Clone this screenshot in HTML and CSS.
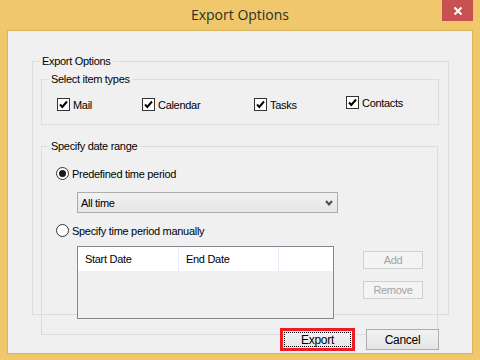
FILE: index.html
```html
<!DOCTYPE html>
<html lang="en">
<head>
    <meta charset="UTF-8">
    <title>Export Options</title>
    <link rel="stylesheet" href="styles.css">
</head>
<body>
    <div class="window">
        <div class="titlebar">
            <span class="title">Export Options</span>
            <div class="close">
                <svg width="10" height="10" viewBox="0 0 10 10"><path d="M1.5 1.5 L8.5 8.5 M8.5 1.5 L1.5 8.5" stroke="#fff" stroke-width="2"/></svg>
            </div>
        </div>

        <div class="client">
            <div class="group group-outer">
                <span class="legend">Export Options</span>

                <div class="group group-types">
                    <span class="legend">Select item types</span>
                    <div class="types">
                        <label class="check check-mail"><span class="box"><svg width="11" height="11" viewBox="0 0 11 11"><polyline points="2,5.5 4.3,8 9,2.5" fill="none" stroke="#000" stroke-width="2"/></svg></span>Mail</label>
                        <label class="check check-calendar"><span class="box"><svg width="11" height="11" viewBox="0 0 11 11"><polyline points="2,5.5 4.3,8 9,2.5" fill="none" stroke="#000" stroke-width="2"/></svg></span>Calendar</label>
                        <label class="check check-tasks"><span class="box"><svg width="11" height="11" viewBox="0 0 11 11"><polyline points="2,5.5 4.3,8 9,2.5" fill="none" stroke="#000" stroke-width="2"/></svg></span>Tasks</label>
                        <label class="check check-contacts"><span class="box"><svg width="11" height="11" viewBox="0 0 11 11"><polyline points="2,5.5 4.3,8 9,2.5" fill="none" stroke="#000" stroke-width="2"/></svg></span>Contacts</label>
                    </div>
                </div>

                <div class="group group-range">
                    <span class="legend">Specify date range</span>
                    <label class="radio radio-first"><span class="circle on"></span>Predefined time period</label>
                    <div class="select">
                        <span>All time</span>
                        <svg width="8" height="6" viewBox="0 0 8 6"><polyline points="1,1 4,4.5 7,1" fill="none" stroke="#4d4d4d" stroke-width="2"/></svg>
                    </div>
                    <label class="radio radio-second"><span class="circle"></span>Specify time period manually</label>
                    <div class="manual">
                        <div class="list">
                            <div class="list-head">
                                <span>Start Date</span>
                                <span>End Date</span>
                                <span></span>
                            </div>
                        </div>
                        <div class="side-buttons">
                            <button class="btn-small" disabled>Add</button>
                            <button class="btn-small" disabled>Remove</button>
                        </div>
                    </div>
                </div>
            </div>

            <div class="footer">
                <button class="btn btn-export"><span class="focus">Export</span></button>
                <button class="btn">Cancel</button>
            </div>
        </div>
    </div>
</body>
</html>
```

FILE: styles.css
```css
/* Dialog "Export Options" */
body {
    margin: 0;
    font-family: "Liberation Sans", Arial, sans-serif;
    font-size: 11px;
    color: #000;
    letter-spacing: -0.3px;
}
.window {
    width: 480px;
    height: 360px;
    background-color: #f0c86b;
    box-sizing: border-box;
}
.titlebar {
    position: relative;
    height: 30px;
    line-height: 29px;
    text-align: center;
}
.title {
    font-family: "Open Sans", "Noto Sans", sans-serif;
    font-size: 14px;
    color: #2a2f2c;
    letter-spacing: 0;
}
.close {
    position: absolute;
    top: 0;
    right: 7px;
    width: 31px;
    height: 21px;
    background-color: #c75050;
    display: flex;
    align-items: center;
    justify-content: center;
}
.client {
    margin: 0 7px;
    height: 324px;
    border: 1px solid #d9b35d;
    background-color: #f0f0f0;
    box-sizing: border-box;
}

/* group boxes */
.group {
    position: relative;
    border: 1px solid #dcdcdc;
    box-sizing: border-box;
}
.legend {
    position: absolute;
    top: -7px;
    left: 7px;
    padding: 0 2px;
    line-height: 13px;
    background-color: #f0f0f0;
}
.group-outer {
    margin: 30px 0 0 24px;
    width: 417px;
    height: 254px;
}
.group-types {
    margin: 17px 0 0 8px;
    width: 398px;
    height: 46px;
}
.group-range {
    margin: 21px 0 0 8px;
    width: 397px;
    height: 189px;
}

/* checkboxes */
.types {
    display: flex;
    padding: 18px 0 0 15px;
}
.check {
    display: flex;
    align-items: center;
    gap: 3px;
    height: 13px;
}
.check-mail { width: 85px; }
.check-calendar { width: 112px; }
.check-tasks { width: 92px; }
.check-contacts { margin-top: -2px; }
.box {
    width: 13px;
    height: 13px;
    border: 1px solid #333;
    background-color: #fff;
    box-sizing: border-box;
    display: flex;
}

/* radios */
.radio {
    display: flex;
    align-items: center;
    gap: 3px;
    height: 13px;
    margin-left: 14px;
}
.radio-first { margin-top: 20px; }
.radio-second { margin-top: 11px; }
.circle {
    width: 13px;
    height: 13px;
    border: 1px solid #333;
    border-radius: 50%;
    background-color: #fff;
    box-sizing: border-box;
    display: flex;
    align-items: center;
    justify-content: center;
}
.circle.on::after {
    content: "";
    width: 7px;
    height: 7px;
    border-radius: 50%;
    background-color: #1a1a1a;
}

/* combo box */
.select {
    margin: 12px 0 0 35px;
    width: 261px;
    height: 21px;
    border: 1px solid #acacac;
    background: linear-gradient(#f2f2f2, #e5e5e5);
    box-sizing: border-box;
    display: flex;
    align-items: center;
    justify-content: space-between;
    padding: 0 4px 0 3px;
}

/* list and side buttons */
.manual {
    display: flex;
    gap: 29px;
    margin: 9px 0 0 35px;
}
.list {
    width: 257px;
    height: 73px;
    border: 1px solid #828790;
    background-color: #f0f0f0;
    box-sizing: border-box;
}
.list-head {
    display: grid;
    grid-template-columns: 101px 100px 1fr;
    height: 24px;
    background-color: #fff;
}
.list-head span {
    border-right: 1px solid #e3edf7;
    padding-left: 7px;
    line-height: 24px;
}
.list-head span:last-child {
    border-right: none;
}
.side-buttons {
    display: flex;
    flex-direction: column;
    gap: 12px;
    margin-top: 5px;
}
.btn-small {
    width: 60px;
    height: 18px;
    padding: 0;
    border: 1px solid #cfcfcf;
    background-color: #f4f4f4;
    color: #a3a3a3;
    font-family: inherit;
    font-size: 11px;
    letter-spacing: inherit;
}

/* footer buttons */
.footer {
    position: relative;
    display: flex;
    justify-content: flex-end;
    gap: 12px;
    margin-top: 14px;
    padding-right: 33px;
}
.btn {
    width: 73px;
    height: 21px;
    padding: 0;
    border: 1px solid #adadad;
    background: linear-gradient(#f2f2f2, #e5e5e5);
    font-family: inherit;
    font-size: 12px;
    color: #000;
    letter-spacing: inherit;
}
.btn-export {
    display: flex;
    padding: 2px;
    outline: 3px solid #ed1c24;
    outline-offset: -2px;
}
.focus {
    flex: 1;
    border: 1px dotted #000;
    display: flex;
    align-items: center;
    justify-content: center;
}
```
